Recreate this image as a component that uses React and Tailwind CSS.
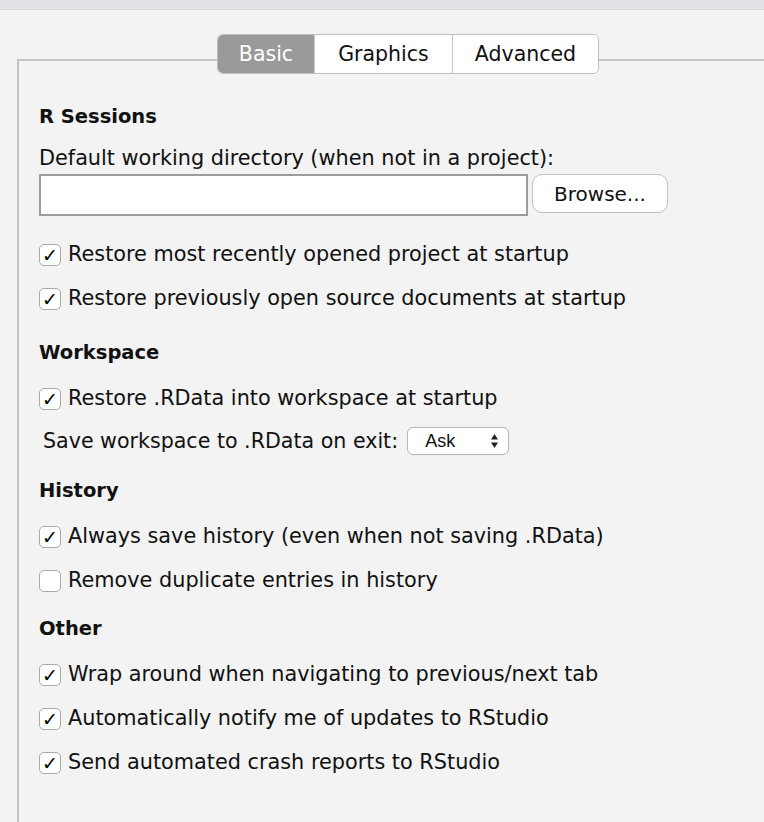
import { useState } from 'react'

const base = { fontFamily: '"DejaVu Sans", "Liberation Sans", sans-serif' }

function Check({ checked, label }) {
  return (
    <div className="flex h-[44px] items-center">
      <span className="flex h-[22px] w-[22px] items-center justify-center rounded-[5px] border-[1.5px] border-[#a9a9a9] bg-white text-[19px] font-bold leading-none text-black">
        {checked ? '✓' : ''}
      </span>
      <span className="ml-[7px] text-[20.8px] text-[#111]">{label}</span>
    </div>
  )
}

function Heading({ children, className }) {
  return (
    <h2 className={'flex h-[24px] items-center text-[19.5px] font-bold text-[#111] ' + className}>
      {children}
    </h2>
  )
}

export default function App() {
  const [tab, setTab] = useState('Basic')
  const tabs = ['Basic', 'Graphics', 'Advanced']
  const widths = { Basic: 'w-[96px]', Graphics: 'w-[138px]', Advanced: 'w-[146px]' }

  return (
    <div className="h-[822px] w-[764px] overflow-hidden bg-[#f2f3f2]" style={base}>
      <div className="h-[10px] border-b border-[#d5d6d8] bg-[#e1e2e5]" />

      <div className="relative ml-[17px] mt-[49px] h-[800px] border-l-2 border-t-2 border-[#c2c3c2] pl-[20px]">
        <div className="absolute left-[198px] top-[-27px] flex h-[40px] overflow-hidden rounded-[6px] border-[1.5px] border-[#bdbdbd] bg-white">
          {tabs.map((t, i) => (
            <button
              key={t}
              type="button"
              onClick={() => setTab(t)}
              className={
                widths[t] +
                ' flex items-center justify-center pt-[1px] text-[20.5px] ' +
                (i > 0 ? 'border-l-[1.5px] border-[#c8c8c8] ' : '') +
                (tab === t ? 'bg-[#9a9a9a] text-white' : 'bg-white text-[#111]')
              }
            >
              {t}
            </button>
          ))}
        </div>

        <Heading className="mt-[44px]">R Sessions</Heading>
        <div className="mt-[18px] flex h-[24px] items-center text-[20.8px] text-[#111]">
          Default working directory (when not in a project):
        </div>
        <div className="mt-[3px] flex items-start">
          <div className="h-[42px] w-[489px] border-2 border-[#9c9c9c] bg-white" />
          <button
            type="button"
            className="ml-[4px] h-[39px] w-[136px] rounded-[10px] border-[1.5px] border-[#c0c0c0] bg-white text-[20px] text-[#111]"
          >
            Browse...
          </button>
        </div>
        <div className="mt-[17px]">
          <Check checked label="Restore most recently opened project at startup" />
          <Check checked label="Restore previously open source documents at startup" />
        </div>

        <Heading className="mt-[20px]">Workspace</Heading>
        <div className="mt-[12px]">
          <Check checked label="Restore .RData into workspace at startup" />
          <div className="flex h-[40px] items-center pl-[4px]">
            <span className="text-[20.6px] text-[#111]">Save workspace to .RData on exit:</span>
            <div className="ml-[9px] flex h-[28px] w-[102px] items-center justify-between rounded-[6px] border-[1.5px] border-[#b5b5b5] bg-white pl-[17px] pr-[10px]">
              <span className="text-[18px] text-[#111]" style={{ fontFamily: '"Liberation Sans", sans-serif' }}>Ask</span>
              <svg width="7" height="16" viewBox="0 0 7 16">
                <path d="M3.5 1 L7 6.5 L0 6.5 Z" fill="#222" />
                <path d="M3.5 15 L7 9.5 L0 9.5 Z" fill="#222" />
              </svg>
            </div>
          </div>
        </div>

        <Heading className="mt-[18px]">History</Heading>
        <div className="mt-[12px]">
          <Check checked label="Always save history (even when not saving .RData)" />
          <Check label="Remove duplicate entries in history" />
        </div>

        <Heading className="mt-[14px]">Other</Heading>
        <div className="mt-[12px]">
          <Check checked label="Wrap around when navigating to previous/next tab" />
          <Check checked label="Automatically notify me of updates to RStudio" />
          <Check checked label="Send automated crash reports to RStudio" />
        </div>
      </div>
    </div>
  )
}
